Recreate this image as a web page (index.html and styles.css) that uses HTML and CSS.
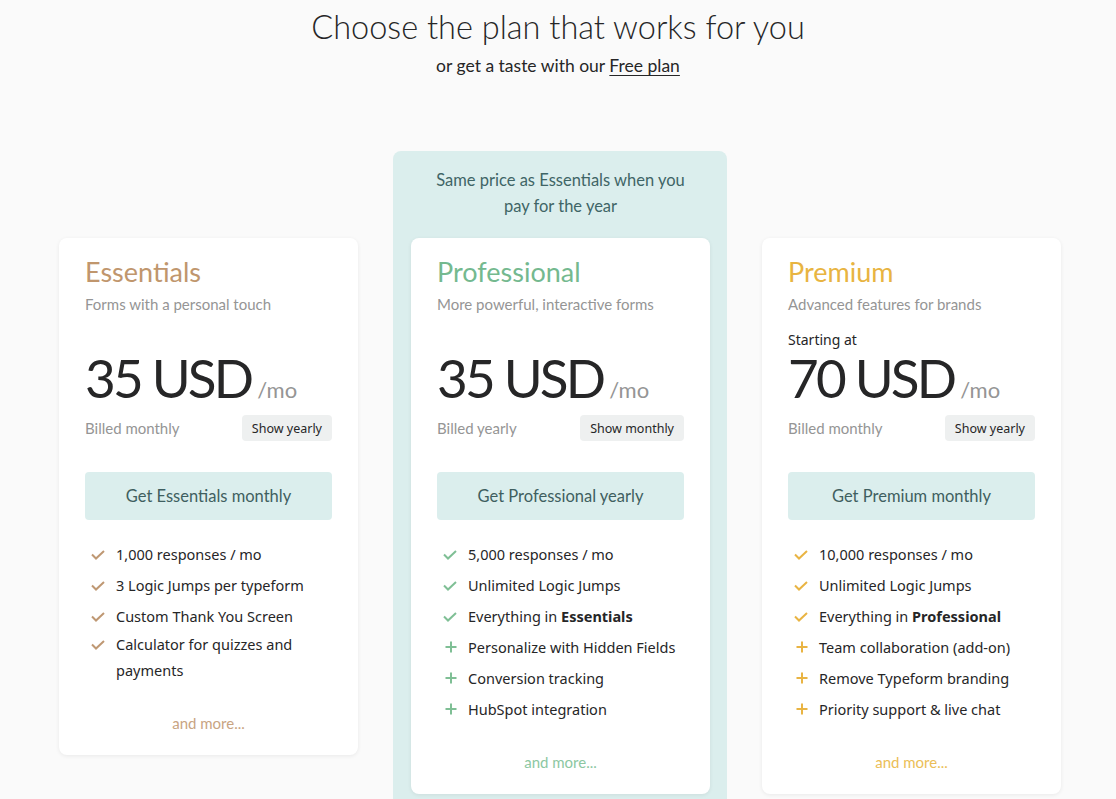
FILE: index.html
```html
<!DOCTYPE html>
<html lang="en">
<head>
<meta charset="utf-8">
<title>Pricing</title>
<link rel="stylesheet" href="styles.css">
</head>
<body>
<header class="intro">
  <h1 class="intro-title">Choose the plan that works for you</h1>
  <p class="intro-sub">or get a taste with our <a href="#" class="intro-link">Free plan</a></p>
</header>

<main class="plans">
  <section class="card card-essentials">
    <h2 class="card-name">Essentials</h2>
    <p class="card-desc">Forms with a personal touch</p>
    <div class="price-block">
      <p class="price-from"></p>
      <p class="price"><span class="price-amount">35 USD</span><span class="price-unit">/mo</span></p>
    </div>
    <div class="billing">
      <span class="billing-text">Billed monthly</span>
      <button class="billing-toggle">Show yearly</button>
    </div>
    <button class="cta">Get Essentials monthly</button>
    <ul class="features">
      <li class="feature"><svg class="ico" viewBox="0 0 14 10"><path d="M1 4.5 L5 8.5 L13 1"/></svg>1,000 responses / mo</li>
      <li class="feature"><svg class="ico" viewBox="0 0 14 10"><path d="M1 4.5 L5 8.5 L13 1"/></svg>3 Logic Jumps per typeform</li>
      <li class="feature"><svg class="ico" viewBox="0 0 14 10"><path d="M1 4.5 L5 8.5 L13 1"/></svg>Custom Thank You Screen</li>
      <li class="feature feature-wrap"><svg class="ico" viewBox="0 0 14 10"><path d="M1 4.5 L5 8.5 L13 1"/></svg>Calculator for quizzes and payments</li>
    </ul>
    <a href="#" class="more">and more...</a>
  </section>

  <div class="featured">
    <p class="featured-note">Same price as Essentials when you pay for the year</p>
    <section class="card card-professional">
      <h2 class="card-name">Professional</h2>
      <p class="card-desc">More powerful, interactive forms</p>
      <div class="price-block">
        <p class="price-from"></p>
        <p class="price"><span class="price-amount">35 USD</span><span class="price-unit">/mo</span></p>
      </div>
      <div class="billing">
        <span class="billing-text">Billed yearly</span>
        <button class="billing-toggle">Show monthly</button>
      </div>
      <button class="cta">Get Professional yearly</button>
      <ul class="features">
        <li class="feature"><svg class="ico" viewBox="0 0 14 10"><path d="M1 4.5 L5 8.5 L13 1"/></svg>5,000 responses / mo</li>
        <li class="feature"><svg class="ico" viewBox="0 0 14 10"><path d="M1 4.5 L5 8.5 L13 1"/></svg>Unlimited Logic Jumps</li>
        <li class="feature"><svg class="ico" viewBox="0 0 14 10"><path d="M1 4.5 L5 8.5 L13 1"/></svg>Everything in <b>Essentials</b></li>
        <li class="feature"><svg class="ico ico-plus" viewBox="0 0 12 12"><path d="M6 0.5 V11.5 M0.5 6 H11.5"/></svg>Personalize with Hidden Fields</li>
        <li class="feature"><svg class="ico ico-plus" viewBox="0 0 12 12"><path d="M6 0.5 V11.5 M0.5 6 H11.5"/></svg>Conversion tracking</li>
        <li class="feature"><svg class="ico ico-plus" viewBox="0 0 12 12"><path d="M6 0.5 V11.5 M0.5 6 H11.5"/></svg>HubSpot integration</li>
      </ul>
      <a href="#" class="more">and more...</a>
    </section>
  </div>

  <section class="card card-premium">
    <h2 class="card-name">Premium</h2>
    <p class="card-desc">Advanced features for brands</p>
    <div class="price-block">
      <p class="price-from">Starting at</p>
      <p class="price"><span class="price-amount">70 USD</span><span class="price-unit">/mo</span></p>
    </div>
    <div class="billing">
      <span class="billing-text">Billed monthly</span>
      <button class="billing-toggle">Show yearly</button>
    </div>
    <button class="cta">Get Premium monthly</button>
    <ul class="features">
      <li class="feature"><svg class="ico" viewBox="0 0 14 10"><path d="M1 4.5 L5 8.5 L13 1"/></svg>10,000 responses / mo</li>
      <li class="feature"><svg class="ico" viewBox="0 0 14 10"><path d="M1 4.5 L5 8.5 L13 1"/></svg>Unlimited Logic Jumps</li>
      <li class="feature"><svg class="ico" viewBox="0 0 14 10"><path d="M1 4.5 L5 8.5 L13 1"/></svg>Everything in <b>Professional</b></li>
      <li class="feature"><svg class="ico ico-plus" viewBox="0 0 12 12"><path d="M6 0.5 V11.5 M0.5 6 H11.5"/></svg>Team collaboration (add-on)</li>
      <li class="feature"><svg class="ico ico-plus" viewBox="0 0 12 12"><path d="M6 0.5 V11.5 M0.5 6 H11.5"/></svg>Remove Typeform branding</li>
      <li class="feature"><svg class="ico ico-plus" viewBox="0 0 12 12"><path d="M6 0.5 V11.5 M0.5 6 H11.5"/></svg>Priority support &amp; live chat</li>
    </ul>
    <a href="#" class="more">and more...</a>
  </section>
</main>
</body>
</html>
```

FILE: styles.css
```css
* { box-sizing: border-box; }

html, body {
  margin: 0;
  padding: 0;
  background: #fafafa;
  color: #262627;
  font-family: "Noto Sans", "Open Sans", sans-serif;
  overflow: hidden;
  height: 799px;
}

.intro {
  text-align: center;
  padding-top: 7px;
}

.intro-title {
  margin: 0;
  font-family: "Lato", "Noto Sans", sans-serif;
  font-weight: 300;
  font-size: 32.5px;
  line-height: 40px;
  color: #262627;
}

.intro-sub {
  margin: 7px 0 0;
  font-family: "Lato", "Noto Sans", sans-serif;
  font-size: 17.5px;
  line-height: 24px;
}

.intro-link {
  color: #262627;
  text-decoration: underline;
  text-underline-offset: 3px;
}

.plans {
  display: flex;
  justify-content: center;
  align-items: flex-start;
  gap: 35px;
  margin-top: 73px;
  padding-left: 4px;
}

.card {
  width: 299px;
  background: #ffffff;
  border-radius: 8px;
  box-shadow: 0 1px 4px rgba(0, 0, 0, 0.07);
  padding: 17px 26px 19px;
  display: flex;
  flex-direction: column;
}

.card-essentials,
.card-premium { margin-top: 87px; }

.featured {
  width: 334px;
  background: #dbeeed;
  border-radius: 8px;
  padding: 16px 17px 30px 18px;
}

.featured-note {
  margin: 0 0 19px;
  text-align: center;
  font-family: "Lato", "Noto Sans", sans-serif;
  font-size: 16.5px;
  line-height: 26px;
  color: #3f6566;
  padding: 0 18px;
}

.card-name {
  margin: 0;
  font-family: "Lato", "Noto Sans", sans-serif;
  font-weight: 400;
  font-size: 27px;
  line-height: 34px;
}

.card-essentials .card-name { color: #c0966d; }
.card-professional .card-name { color: #74b98f; }
.card-premium .card-name { color: #e8b441; }

.card-desc {
  margin: 4px 0 0;
  font-family: "Lato", "Noto Sans", sans-serif;
  font-size: 15px;
  line-height: 22px;
  color: #959595;
}

.price-block {
  margin-top: 15px;
}

.price-from {
  margin: 0;
  height: 20px;
  font-size: 14px;
  line-height: 20px;
  color: #262627;
}

.price {
  margin: 0;
  height: 56px;
  padding-top: 2px;
  display: flex;
  align-items: baseline;
  gap: 6px;
  white-space: nowrap;
}

.price-amount {
  font-family: "Lato", "Noto Sans", sans-serif;
  font-weight: 400;
  font-size: 53px;
  line-height: 52px;
  letter-spacing: -2.8px;
  color: #262627;
}

.price-unit {
  font-family: "Lato", "Noto Sans", sans-serif;
  font-size: 22px;
  line-height: 26px;
  color: #959595;
}

.billing {
  margin-top: 9px;
  display: flex;
  justify-content: space-between;
  align-items: center;
}

.billing-text {
  font-family: "Lato", "Noto Sans", sans-serif;
  font-size: 15px;
  color: #959595;
}

.billing-toggle {
  height: 26px;
  border: 0;
  border-radius: 4px;
  background: #eef0f0;
  padding: 0 10px;
  font-family: "Noto Sans", sans-serif;
  font-size: 12.5px;
  color: #262627;
}

.cta {
  margin-top: 31px;
  height: 48px;
  width: 100%;
  border: 0;
  border-radius: 4px;
  background: #dbeeed;
  font-family: "Lato", "Noto Sans", sans-serif;
  font-size: 16.5px;
  color: #3f5f60;
}

.features {
  list-style: none;
  margin: 21px 0 0;
  padding: 0;
}

.feature {
  position: relative;
  padding-left: 31px;
  font-size: 14.5px;
  line-height: 26px;
  margin-bottom: 5px;
  color: #262627;
}

.feature-wrap { margin-top: -3px; }

.feature b { font-weight: 700; }

.ico {
  position: absolute;
  left: 6px;
  top: 9px;
  width: 14px;
  height: 10px;
  fill: none;
  stroke-width: 2;
}

.ico-plus {
  left: 8px;
  top: 7px;
  width: 12px;
  height: 12px;
}

.card-essentials .ico { stroke: #bf9873; }
.card-professional .ico { stroke: #7fbf95; }
.card-premium .ico { stroke: #e9b443; }

.more {
  margin-top: 22px;
  text-align: center;
  font-family: "Lato", "Noto Sans", sans-serif;
  font-size: 15px;
  line-height: 26px;
  text-decoration: none;
}

.card-essentials .more { color: #c8a482; }
.card-professional .more { color: #8cc7a2; }
.card-premium .more { color: #ebbe57; }
```
